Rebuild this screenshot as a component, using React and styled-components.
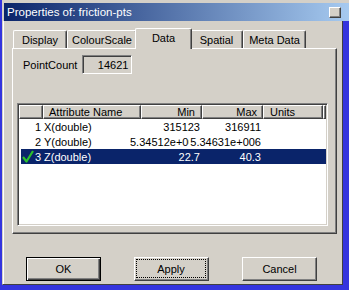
import styled, { createGlobalStyle } from 'styled-components';

// Windows-classic palette
const FACE = '#d4d0c8';
const SHADOW = '#808080';
const DARK = '#404040';
const NAVY = '#0a246a';

const GlobalStyle = createGlobalStyle`
  html, body {
    margin: 0;
    padding: 0;
    background: #3434de;
  }
  body {
    font-family: "Liberation Sans", Arial, sans-serif;
    font-size: 11px;
    color: #000;
  }
`;

const Screen = styled.div`
  width: 349px;
  height: 290px;
  padding-left: 2px;
  box-sizing: border-box;
  background: #3434de;
  display: flex;
  flex-direction: column;
  overflow: hidden;
`;

const TitleArea = styled.div`
  width: 347px;
  padding: 3px 0 0 2px;
  box-sizing: border-box;
  background: ${FACE};
`;

const TitleBar = styled.div`
  height: 18px;
  display: flex;
  align-items: center;
  justify-content: space-between;
  padding: 0 8px 0 3px;
  background: linear-gradient(to right, ${NAVY}, #a6caf0);
  color: #fff;
  font-size: 11.5px;
`;

const TitleButton = styled.div`
  width: 12px;
  height: 11px;
  box-sizing: border-box;
  background: ${FACE};
  border: 1px solid;
  border-color: #fff ${DARK} ${DARK} #fff;
  box-shadow: inset -1px -1px ${SHADOW};
`;

const Body = styled.div`
  width: 341px;
  height: 264px;
  box-sizing: border-box;
  background: ${FACE};
  border-left: 1px solid ${FACE};
  border-right: 1px solid ${DARK};
  border-bottom: 1px solid ${DARK};
  box-shadow: inset 1px 0 #fff;
  padding: 7px 5px 0 9px;
  display: flex;
  flex-direction: column;
`;

const TabRow = styled.div`
  display: flex;
  align-items: flex-end;
  height: 20px;
  padding-left: 1px;
`;

const Tab = styled.div`
  width: ${(p) => p.$w}px;
  height: ${(p) => (p.$active ? 21 : 18)}px;
  margin: ${(p) => (p.$active ? '0 -2px -1px' : '0')};
  box-sizing: border-box;
  display: flex;
  align-items: center;
  justify-content: center;
  padding-bottom: ${(p) => (p.$active ? 2 : 0)}px;
  background: ${FACE};
  border-top: 1px solid #fff;
  border-left: 1px solid #fff;
  border-right: 1px solid ${DARK};
  border-radius: 2px 2px 0 0;
  box-shadow: inset -1px 0 ${SHADOW};
  position: relative;
  z-index: ${(p) => (p.$active ? 1 : 0)};
  white-space: nowrap;
`;

const Panel = styled.div`
  width: 325px;
  height: 186px;
  box-sizing: border-box;
  border-top: 1px solid #fff;
  border-left: 1px solid #fff;
  border-right: 1px solid ${DARK};
  border-bottom: 1px solid ${DARK};
  box-shadow: inset -1px -1px ${SHADOW};
  padding-top: 6px;
  display: flex;
  flex-direction: column;
`;

const FieldRow = styled.div`
  display: flex;
  align-items: center;
  gap: 5px;
  margin-left: 10px;
  height: 19px;
`;

const ReadOnlyBox = styled.div`
  width: 50px;
  height: 19px;
  box-sizing: border-box;
  border: 1px solid;
  border-color: ${SHADOW} #fff #fff ${SHADOW};
  box-shadow: inset 1px 1px ${DARK};
  display: flex;
  align-items: center;
  justify-content: flex-end;
  padding-right: 3px;
`;

const List = styled.div`
  width: 311px;
  height: 123px;
  box-sizing: border-box;
  margin: 29px 0 0 4px;
  background: #fff;
  border: 1px solid;
  border-color: ${SHADOW} #fff #fff ${SHADOW};
  box-shadow: inset 1px 1px ${DARK}, inset -1px -1px ${FACE};
  padding: 1px;
  overflow: hidden;
`;

const HeaderRow = styled.div`
  display: grid;
  grid-template-columns: 24px 98px 61px 61px 60px 1fr;
  height: 14px;
  background: ${FACE};
`;

const HeaderCell = styled.div`
  box-sizing: border-box;
  display: flex;
  align-items: center;
  justify-content: ${(p) => (p.$right ? 'flex-end' : 'flex-start')};
  padding: ${(p) => (p.$right ? `0 ${p.$pad}px 0 0` : `0 0 0 ${p.$pad}px`)};
  border-top: 1px solid #fff;
  border-left: 1px solid #fff;
  border-right: 1px solid ${DARK};
  border-bottom: 1px solid ${DARK};
  box-shadow: inset -1px -1px ${SHADOW};
  white-space: nowrap;
`;

const Row = styled.div`
  display: grid;
  grid-template-columns: 22px 98px 61px 61px 60px 1fr;
  height: 15px;
  margin-left: 2px;
  background: ${(p) => (p.$selected ? NAVY : '#fff')};
  color: ${(p) => (p.$selected ? '#fff' : '#000')};
`;

const Cell = styled.div`
  display: flex;
  align-items: center;
  justify-content: ${(p) => (p.$right ? 'flex-end' : 'flex-start')};
  padding: ${(p) => (p.$right ? '0 2px 0 0' : '0 0 0 1px')};
  white-space: nowrap;
  min-width: 0;
`;

// a value too wide for its column is cut where the next column starts drawing
const Clipped = styled.span`
  display: block;
  width: 59px;
  margin-right: 11px;
  overflow: hidden;
  flex-shrink: 0;
`;

const ButtonRow = styled.div`
  display: flex;
  gap: 33px;
  margin: 23px 0 0 14px;
`;

const Button = styled.div`
  width: 75px;
  height: 24px;
  box-sizing: border-box;
  background: ${FACE};
  border: 1px solid;
  border-color: ${(p) => (p.$default ? '#000' : `#fff ${DARK} ${DARK} #fff`)};
  box-shadow: ${(p) =>
    p.$default
      ? `inset 1px 1px #fff, inset -1px -1px ${DARK}, inset -2px -2px ${SHADOW}`
      : `inset -1px -1px ${SHADOW}`};
  display: flex;
  align-items: center;
  justify-content: center;
  padding: 1px;
`;

const FocusRing = styled.div`
  flex: 1;
  align-self: stretch;
  display: flex;
  align-items: center;
  justify-content: center;
  border: 1px dotted #000;
  margin: 0 1px 1px 0;
`;

const Check = () => (
  <svg width="12" height="13" viewBox="0 0 12 13" style={{ marginRight: 1 }}>
    <path d="M1 7 L4.5 11.5 L11 1" fill="none" stroke="#2cc12c" strokeWidth="2.2" strokeLinejoin="round" />
  </svg>
);

const tabs = [
  { label: 'Display', w: 54 },
  { label: 'ColourScale', w: 70 },
  { label: 'Data', w: 57, active: true },
  { label: 'Spatial', w: 53 },
  { label: 'Meta Data', w: 63 },
];

const rows = [
  { n: 1, name: 'X(double)', min: '315123', max: '316911' },
  { n: 2, name: 'Y(double)', min: '5.34512e+006', max: '5.34631e+006', clip: true },
  { n: 3, name: 'Z(double)', min: '22.7', max: '40.3', selected: true },
];

export default function App() {
  return (
    <>
      <GlobalStyle />
      <Screen>
        <TitleArea>
          <TitleBar>
            <span>Properties of: friction-pts</span>
            <TitleButton />
          </TitleBar>
        </TitleArea>
        <Body>
          <TabRow>
            {tabs.map((t) => (
              <Tab key={t.label} $w={t.w} $active={t.active}>
                {t.label}
              </Tab>
            ))}
          </TabRow>
          <Panel>
            <FieldRow>
              <span>PointCount</span>
              <ReadOnlyBox>14621</ReadOnlyBox>
            </FieldRow>
            <List>
              <HeaderRow>
                <HeaderCell />
                <HeaderCell $pad={5}>Attribute Name</HeaderCell>
                <HeaderCell $right $pad={6}>Min</HeaderCell>
                <HeaderCell $right $pad={5}>Max</HeaderCell>
                <HeaderCell $pad={6}>Units</HeaderCell>
                <HeaderCell />
              </HeaderRow>
              {rows.map((r) => (
                <Row key={r.n} $selected={r.selected}>
                  <Cell $right>
                    {r.selected && <Check />}
                    {r.n}
                  </Cell>
                  <Cell>{r.name}</Cell>
                  <Cell $right>{r.clip ? <Clipped>{r.min}</Clipped> : r.min}</Cell>
                  <Cell $right>{r.max}</Cell>
                  <Cell />
                  <Cell />
                </Row>
              ))}
            </List>
          </Panel>
          <ButtonRow>
            <Button $default>OK</Button>
            <Button>
              <FocusRing>Apply</FocusRing>
            </Button>
            <Button>Cancel</Button>
          </ButtonRow>
        </Body>
      </Screen>
    </>
  );
}
